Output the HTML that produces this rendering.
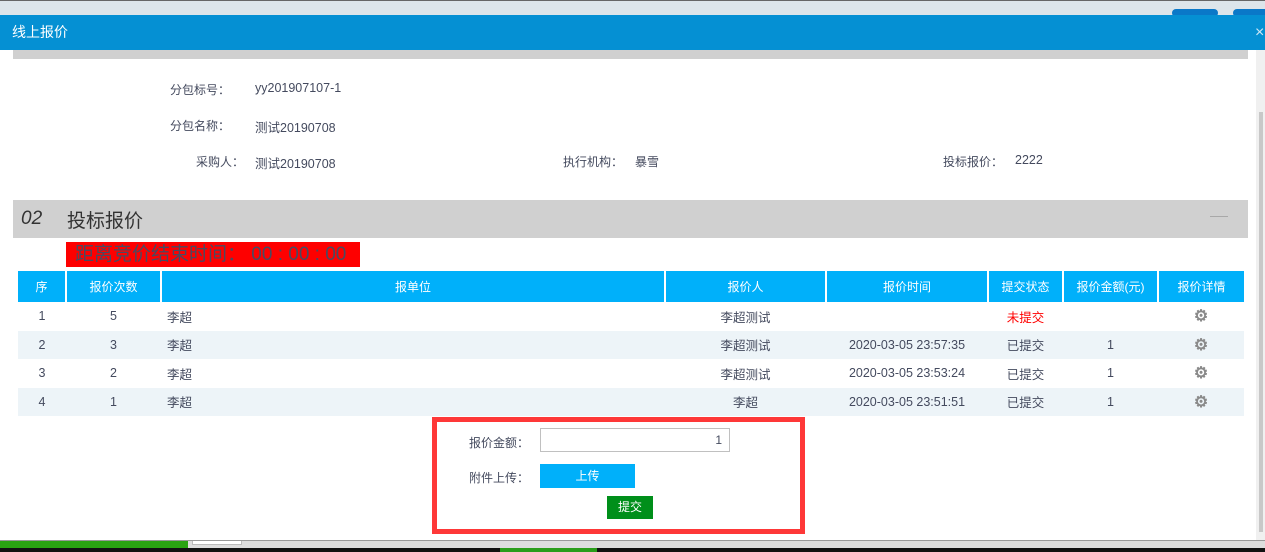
<!DOCTYPE html>
<html><head><meta charset="utf-8"><style>
*{margin:0;padding:0;box-sizing:border-box}
body{width:1265px;height:552px;overflow:hidden;background:#fff;font-family:"Liberation Sans","Noto Sans CJK SC",sans-serif;font-size:12px;color:#444a5e;position:relative}
.a{position:absolute}
table{border-collapse:collapse;position:absolute;left:18px;top:271px;width:1226px;table-layout:fixed}
th{background:#00b0fa;color:#fff;font-weight:normal;height:31px;border-left:2px solid #fff;font-size:12px}
th:first-child{border-left:none}
td{height:28.5px;text-align:center;font-size:12.5px}
td.l{text-align:left;padding-left:6px}
tr.alt td{background:#edf4f8}
.gear{color:#8a8a8a;font-size:16px;font-weight:bold}
</style></head><body>
<div class="a" style="left:0;top:0;width:1265px;height:15px;background:#dde5ea;border-top:1px solid #666"></div>
<div class="a" style="left:1172px;top:9px;width:46px;height:8px;background:#0a78c8;border-radius:4px"></div>
<div class="a" style="left:1233px;top:9px;width:40px;height:8px;background:#0a78c8;border-radius:4px"></div>
<div class="a" style="left:0;top:15px;width:1265px;height:35px;background:#0590d3;color:#fff;font-size:14px;line-height:35px;padding-left:12px">线上报价</div>
<div class="a" style="left:1255px;top:15px;color:#cfe8f6;font-size:16px;line-height:35px">×</div>
<div class="a" style="left:1256px;top:50px;width:9px;height:490px;background:#f0f0f0"></div>
<div class="a" style="left:1259px;top:112px;width:4px;height:420px;background:#c8c8c8"></div>
<div class="a" style="left:13px;top:50px;width:1235px;height:9px;background:#d0d0d0"></div>

<div class="a" style="left:170px;top:81px">分包标号：</div><div class="a" style="left:255px;top:81px;font-size:12.5px">yy201907107-1</div>
<div class="a" style="left:170px;top:117px">分包名称：</div><div class="a" style="left:255px;top:117px;font-size:12.5px">测试20190708</div>
<div class="a" style="left:196px;top:153px">采购人：</div><div class="a" style="left:255px;top:153px;font-size:12.5px">测试20190708</div>
<div class="a" style="left:563px;top:153px">执行机构：</div><div class="a" style="left:635px;top:153px">暴雪</div>
<div class="a" style="left:943px;top:153px">投标报价：</div><div class="a" style="left:1015px;top:153px;font-size:12.5px">2222</div>

<div class="a" style="left:13px;top:200px;width:1235px;height:38px;background:#d0d0d0"></div>
<div class="a" style="left:21px;top:208px;font-size:19px;font-style:italic;color:#333">02</div>
<div class="a" style="left:67px;top:206px;font-size:19px;color:#333">投标报价</div>
<div class="a" style="left:1210px;top:216px;width:18px;height:1px;background:#a8a8a8"></div>

<div class="a" style="left:66px;top:242px;width:294px;height:25px;background:#fe0000;color:#4a4a60;font-size:19px;line-height:25px;padding-left:9px;white-space:nowrap">距离竞价结束时间：&nbsp;00 : 00 : 00</div>

<table>
<colgroup><col style="width:48px"><col style="width:95px"><col style="width:504px"><col style="width:161px"><col style="width:162px"><col style="width:75px"><col style="width:95px"><col style="width:86px"></colgroup>
<tr><th>序</th><th>报价次数</th><th>报单位</th><th>报价人</th><th>报价时间</th><th>提交状态</th><th>报价金额(元)</th><th>报价详情</th></tr>
<tr><td>1</td><td>5</td><td class="l">李超</td><td>李超测试</td><td></td><td style="color:#f00">未提交</td><td></td><td class="gear">⚙</td></tr>
<tr class="alt"><td>2</td><td>3</td><td class="l">李超</td><td>李超测试</td><td>2020-03-05 23:57:35</td><td>已提交</td><td>1</td><td class="gear">⚙</td></tr>
<tr><td>3</td><td>2</td><td class="l">李超</td><td>李超测试</td><td>2020-03-05 23:53:24</td><td>已提交</td><td>1</td><td class="gear">⚙</td></tr>
<tr class="alt"><td>4</td><td>1</td><td class="l">李超</td><td>李超</td><td>2020-03-05 23:51:51</td><td>已提交</td><td>1</td><td class="gear">⚙</td></tr>
</table>

<div class="a" style="left:432px;top:417px;width:373px;height:117px;border:5px solid #fe3838"></div>
<div class="a" style="left:469px;top:434px">报价金额：</div>
<div class="a" style="left:540px;top:428px;width:190px;height:24px;border:1px solid #c0c0c0;text-align:right;padding-right:7px;line-height:22px">1</div>
<div class="a" style="left:469px;top:469px">附件上传：</div>
<div class="a" style="left:540px;top:464px;width:95px;height:24px;background:#00b0fa;color:#fff;text-align:center;line-height:24px">上传</div>
<div class="a" style="left:607px;top:496px;width:46px;height:23px;background:#008f1a;color:#fff;text-align:center;line-height:23px">提交</div>

<div class="a" style="left:0;top:540px;width:1265px;height:8px;background:#ddd;border-top:1px solid #999"></div>
<div class="a" style="left:0;top:541px;width:188px;height:8px;background:#2aa312"></div>
<div class="a" style="left:192px;top:541px;width:50px;height:4px;border:1px solid #bbb;border-top:none;background:#fff"></div>
<div class="a" style="left:500px;top:548px;width:97px;height:4px;background:#2a9d1a"></div>
<div class="a" style="left:0;top:548px;width:500px;height:4px;background:#111"></div>
<div class="a" style="left:597px;top:548px;width:668px;height:4px;background:#111"></div>
</body></html>
